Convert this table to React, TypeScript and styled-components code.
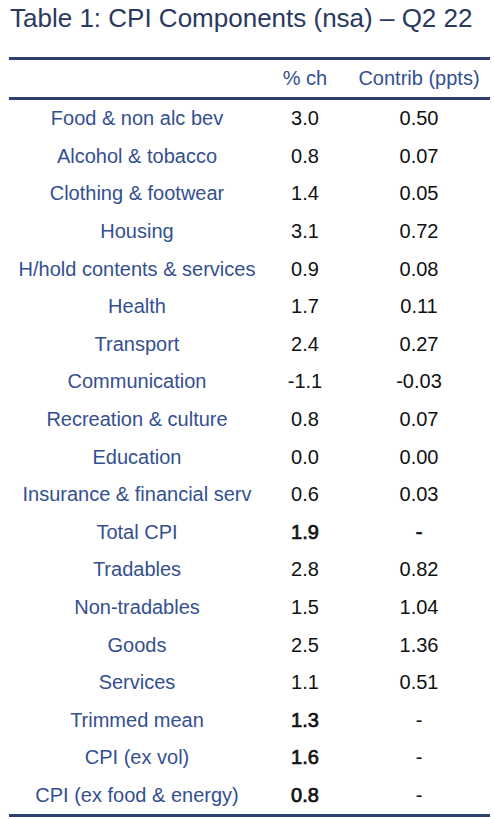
import React from "react";
import styled, { createGlobalStyle } from "styled-components";

const Global = createGlobalStyle`
  html, body { margin: 0; padding: 0; background: #fff; }
  body { font-family: "Liberation Sans", Arial, sans-serif; }
`;

const Page = styled.div`
  width: 494px;
  padding-top: 5px;
`;

const Title = styled.h1`
  margin: 0 0 0 10px;
  font-size: 26px;
  line-height: 26px;
  font-weight: 400;
  color: #2a3960;
  white-space: nowrap;
`;

const Table = styled.div`
  margin: 26px 0 0 9px;
  width: 481px;
  border-top: 3px solid #2c3f6e;
  border-bottom: 3px solid #2c3f6e;
`;

const Row = styled.div<{ $header?: boolean }>`
  display: grid;
  grid-template-columns: 256px 80px 1fr;
  height: ${(p) => (p.$header ? "37px" : "37.6px")};
  align-items: center;
  font-size: 20px;
  ${(p) => (p.$header ? "border-bottom: 3px solid #2c3f6e;" : "")}
`;

const Label = styled.div`
  text-align: center;
  color: #34508f;
  white-space: nowrap;
`;

const Value = styled.div<{ $bold?: boolean; $right?: boolean }>`
  text-align: center;
  color: #111;
  font-weight: 400;
  -webkit-text-stroke: ${(p) => (p.$bold ? "0.7px #111" : "0")};
  padding-left: ${(p) => (p.$right ? "3px" : "0")};
  white-space: nowrap;
`;

const HeadCell = styled.div<{ $right?: boolean }>`
  text-align: center;
  color: #34508f;
  padding-left: ${(p) => (p.$right ? "3px" : "0")};
  white-space: nowrap;
`;

type R = { l: string; a: string; b: string; ba?: boolean; bb?: boolean };

const rows: R[] = [
  { l: "Food & non alc bev", a: "3.0", b: "0.50" },
  { l: "Alcohol & tobacco", a: "0.8", b: "0.07" },
  { l: "Clothing & footwear", a: "1.4", b: "0.05" },
  { l: "Housing", a: "3.1", b: "0.72" },
  { l: "H/hold contents & services", a: "0.9", b: "0.08" },
  { l: "Health", a: "1.7", b: "0.11" },
  { l: "Transport", a: "2.4", b: "0.27" },
  { l: "Communication", a: "-1.1", b: "-0.03" },
  { l: "Recreation & culture", a: "0.8", b: "0.07" },
  { l: "Education", a: "0.0", b: "0.00" },
  { l: "Insurance & financial serv", a: "0.6", b: "0.03" },
  { l: "Total CPI", a: "1.9", b: "-", ba: true, bb: true },
  { l: "Tradables", a: "2.8", b: "0.82" },
  { l: "Non-tradables", a: "1.5", b: "1.04" },
  { l: "Goods", a: "2.5", b: "1.36" },
  { l: "Services", a: "1.1", b: "0.51" },
  { l: "Trimmed mean", a: "1.3", b: "-", ba: true },
  { l: "CPI (ex vol)", a: "1.6", b: "-", ba: true },
  { l: "CPI (ex food & energy)", a: "0.8", b: "-", ba: true },
];

export default function App() {
  return (
    <Page>
      <Global />
      <Title>Table 1: CPI Components (nsa) – Q2 22</Title>
      <Table>
        <Row $header>
          <div />
          <HeadCell>% ch</HeadCell>
          <HeadCell $right>Contrib (ppts)</HeadCell>
        </Row>
        {rows.map((r) => (
          <Row key={r.l}>
            <Label>{r.l}</Label>
            <Value $bold={r.ba}>{r.a}</Value>
            <Value $bold={r.bb} $right>
              {r.b}
            </Value>
          </Row>
        ))}
      </Table>
    </Page>
  );
}
